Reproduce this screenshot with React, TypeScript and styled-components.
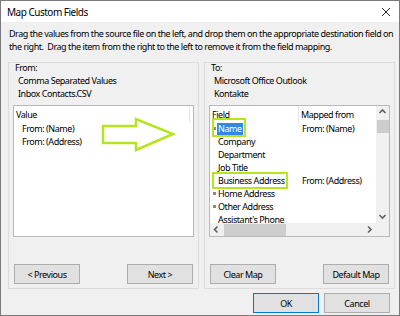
import React from "react";
import styled, { createGlobalStyle } from "styled-components";

const GlobalStyle = createGlobalStyle`
  html, body {
    margin: 0;
    padding: 0;
    background: #ffffff;
  }
  * {
    box-sizing: border-box;
  }
`;

const GREEN = "#b5e61d";

const Window = styled.div`
  width: 400px;
  height: 316px;
  border: 1px solid #7a7a7a;
  background: #f0f0f0;
  display: flex;
  flex-direction: column;
  font-family: "Noto Sans", "Open Sans", sans-serif;
  font-size: 9px;
  letter-spacing: -0.45px;
  color: #000;
  overflow: hidden;
`;

const TitleBar = styled.div`
  height: 21px;
  flex: none;
  background: #fff;
  display: flex;
  align-items: center;
  justify-content: space-between;
  padding: 0 8px 0 6px;
`;

const Title = styled.span`
  font-size: 10px;
  letter-spacing: -0.5px;
`;

const CloseButton = styled.span`
  display: flex;
  width: 10px;
  height: 10px;
`;

const Body = styled.div`
  flex: 1;
  display: flex;
  flex-direction: column;
  padding-top: 5px;
`;

const Instructions = styled.p`
  margin: 0;
  padding: 0 8px;
  line-height: 13px;
  height: 26px;
  white-space: pre;
`;

const Groups = styled.div`
  display: flex;
  gap: 5px;
  margin-top: 9px;
  padding-left: 7px;
`;

const Group = styled.div`
  width: 191px;
  height: 227px;
  border: 1px solid #dcdcdc;
  display: flex;
  flex-direction: column;
  padding: 0 4px 4px 4px;
`;

const GroupLabel = styled.div`
  margin-top: -2px;
  padding-left: 2px;
  line-height: 13px;
`;

const SourceLine = styled.div`
  padding-left: 5px;
  line-height: 13px;
`;

const ListBox = styled.div`
  position: relative;
  margin-top: 5px;
  height: 132px;
  border: 1px solid #b9b9b9;
  background: #fff;
  display: grid;
  grid-template-columns: 1fr 13px;
  grid-template-rows: 1fr 13px;
`;

const PlainList = styled.div`
  position: relative;
  margin-top: 5px;
  height: 132px;
  border: 1px solid #b9b9b9;
  background: #fff;
`;

const ListContent = styled.div`
  overflow: hidden;
`;

const HeaderRow = styled.div`
  display: flex;
  height: 16px;
  align-items: center;
`;

const HeaderCell = styled.div<{ $width?: number }>`
  width: ${(p) => (p.$width ? `${p.$width}px` : "auto")};
  flex: ${(p) => (p.$width ? "none" : "1")};
  height: 100%;
  display: flex;
  align-items: center;
  padding-left: 2px;
  border-right: 1px solid ${(p) => (p.$width ? "#e5e5e5" : "transparent")};
`;

const Row = styled.div`
  display: flex;
  height: 13px;
  align-items: center;
  white-space: nowrap;
`;

const FieldCell = styled.div`
  width: 89px;
  flex: none;
  display: flex;
  align-items: center;
  padding-left: 3px;
`;

const MappedCell = styled.div`
  padding-left: 3px;
`;

const ValueCell = styled.div`
  padding-left: 8px;
`;

const Marker = styled.span<{ $show?: boolean }>`
  width: 3px;
  height: 3px;
  margin-right: 2px;
  flex: none;
  background: ${(p) => (p.$show ? "#8a8a8a" : "transparent")};
`;

const Selected = styled.span`
  background: #3089e0;
  color: #fff;
  padding: 0 1px;
  margin-left: -1px;
  line-height: 12px;
`;

const Highlight = styled.span<{ $left: number; $top: number; $w: number; $h: number }>`
  position: absolute;
  left: ${(p) => p.$left}px;
  top: ${(p) => p.$top}px;
  width: ${(p) => p.$w}px;
  height: ${(p) => p.$h}px;
  border: 2px solid ${GREEN};
  pointer-events: none;
`;

const VScroll = styled.div`
  background: #f0f0f0;
  display: flex;
  flex-direction: column;
  align-items: center;
`;

const HScroll = styled.div`
  background: #f0f0f0;
  display: flex;
  align-items: center;
`;

const Corner = styled.div`
  background: #f0f0f0;
`;

const ArrowBtn = styled.div`
  width: 13px;
  height: 13px;
  flex: none;
  display: flex;
  align-items: center;
  justify-content: center;
`;

const VThumb = styled.div`
  width: 12px;
  height: 13px;
  margin-top: 1px;
  background: #cdcdcd;
`;

const HThumb = styled.div`
  width: 62px;
  height: 12px;
  margin-left: 1px;
  background: #cdcdcd;
`;

const Spacer = styled.div`
  flex: 1;
`;

const ButtonRow = styled.div`
  display: flex;
  justify-content: space-between;
  padding: 0 1px;
`;

const Button = styled.button<{ $primary?: boolean }>`
  width: 66px;
  height: 20px;
  padding: 0;
  background: #e1e1e1;
  border: 1px solid ${(p) => (p.$primary ? "#0078d7" : "#adadad")};
  font: inherit;
  letter-spacing: inherit;
  color: #000;
`;

const Footer = styled.div`
  display: flex;
  justify-content: flex-end;
  gap: 5px;
  margin-top: 4px;
  padding-right: 9px;
`;

const Chevron = ({ dir }: { dir: "up" | "down" | "left" | "right" }) => {
  const d = {
    up: "M1.5 5 L4.5 2 L7.5 5",
    down: "M1.5 3 L4.5 6 L7.5 3",
    left: "M5.5 1.5 L2.5 4.5 L5.5 7.5",
    right: "M3 1.5 L6 4.5 L3 7.5",
  }[dir];
  return (
    <svg width="9" height="9" viewBox="0 0 9 9">
      <path d={d} fill="none" stroke="#606060" strokeWidth="1.6" />
    </svg>
  );
};

const fields: { name: string; marker?: boolean; mapped?: string; selected?: boolean }[] = [
  { name: "Name", marker: true, mapped: "From: (Name)", selected: true },
  { name: "Company" },
  { name: "Department" },
  { name: "Job Title" },
  { name: "Business Address", mapped: "From: (Address)" },
  { name: "Home Address", marker: true },
  { name: "Other Address", marker: true },
  { name: "Assistant's Phone" },
];

export default function App() {
  return (
    <>
      <GlobalStyle />
      <Window>
        <TitleBar>
          <Title>Map Custom Fields</Title>
          <CloseButton>
            <svg width="10" height="10" viewBox="0 0 10 10">
              <path d="M1 1 L9 9 M9 1 L1 9" stroke="#222" strokeWidth="1" />
            </svg>
          </CloseButton>
        </TitleBar>
        <Body>
          <Instructions>
            {"Drag the values from the source file on the left, and drop them on the appropriate destination field on\nthe right.  Drag the item from the right to the left to remove it from the field mapping."}
          </Instructions>
          <Groups>
            <Group>
              <GroupLabel>From:</GroupLabel>
              <SourceLine>Comma Separated Values</SourceLine>
              <SourceLine>Inbox Contacts.CSV</SourceLine>
              <PlainList>
                <HeaderRow>
                  <HeaderCell $width={176}>Value</HeaderCell>
                </HeaderRow>
                <Row>
                  <ValueCell>From: (Name)</ValueCell>
                </Row>
                <Row>
                  <ValueCell>From: (Address)</ValueCell>
                </Row>
                <svg
                  width="180"
                  height="60"
                  viewBox="0 0 180 60"
                  style={{ position: "absolute", left: 0, top: 0 }}
                >
                  <polygon
                    points="89,20 122,20 122,13 159,28 122,44 122,37 89,37"
                    fill="none"
                    stroke={GREEN}
                    strokeWidth="2.5"
                  />
                </svg>
              </PlainList>
              <Spacer />
              <ButtonRow>
                <Button>&lt; Previous</Button>
                <Button>Next &gt;</Button>
              </ButtonRow>
            </Group>
            <Group>
              <GroupLabel>To:</GroupLabel>
              <SourceLine>Microsoft Office Outlook</SourceLine>
              <SourceLine>Kontakte</SourceLine>
              <ListBox>
                <ListContent>
                  <HeaderRow>
                    <HeaderCell $width={89}>Field</HeaderCell>
                    <HeaderCell>Mapped from</HeaderCell>
                  </HeaderRow>
                  {fields.map((f) => (
                    <Row key={f.name}>
                      <FieldCell>
                        <Marker $show={f.marker} />
                        {f.selected ? <Selected>{f.name}</Selected> : f.name}
                      </FieldCell>
                      <MappedCell>{f.mapped}</MappedCell>
                    </Row>
                  ))}
                </ListContent>
                <VScroll>
                  <ArrowBtn>
                    <Chevron dir="up" />
                  </ArrowBtn>
                  <VThumb />
                  <Spacer />
                  <ArrowBtn>
                    <Chevron dir="down" />
                  </ArrowBtn>
                </VScroll>
                <HScroll>
                  <ArrowBtn>
                    <Chevron dir="left" />
                  </ArrowBtn>
                  <HThumb />
                  <Spacer />
                  <ArrowBtn>
                    <Chevron dir="right" />
                  </ArrowBtn>
                </HScroll>
                <Corner />
                <Highlight $left={2} $top={12} $w={34} $h={19} />
                <Highlight $left={2} $top={66} $w={76} $h={17} />
              </ListBox>
              <Spacer />
              <ButtonRow>
                <Button>Clear Map</Button>
                <Button>Default Map</Button>
              </ButtonRow>
            </Group>
          </Groups>
          <Footer>
            <Button $primary>OK</Button>
            <Button>Cancel</Button>
          </Footer>
        </Body>
      </Window>
    </>
  );
}
